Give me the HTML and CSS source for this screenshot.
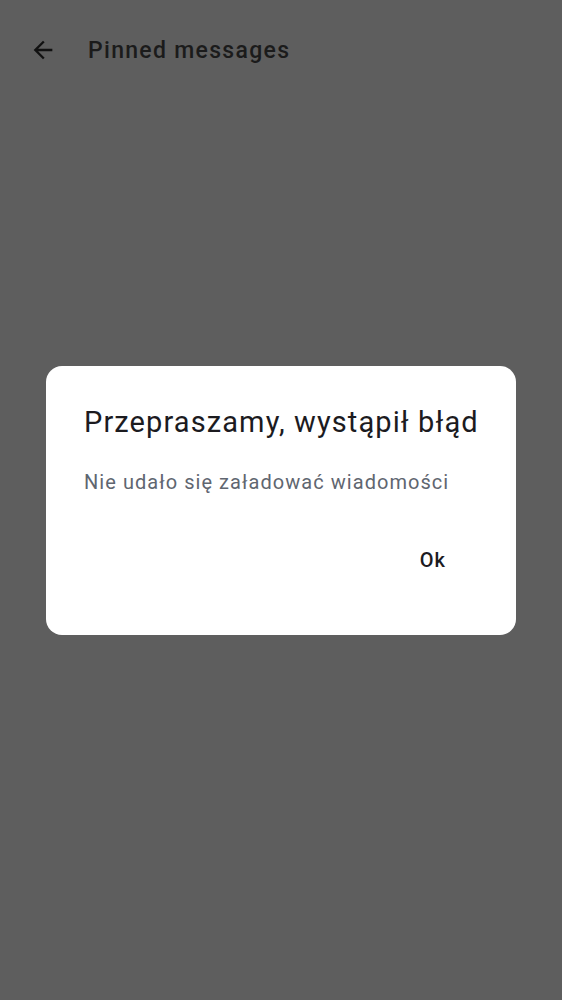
FILE: index.html
```html
<!DOCTYPE html>
<html lang="pl">
<head>
<meta charset="utf-8">
<link rel="stylesheet" href="styles.css">
</head>
<body>
<div class="app">
  <header class="appbar">
    <button class="back" aria-label="Back">
      <svg width="24" height="24" viewBox="0 0 24 24"><path d="M20 11H7.83l5.59-5.59L12 4l-8 8 8 8 1.41-1.41L7.83 13H20v-2z" fill="currentColor"/></svg>
    </button>
    <h1 class="title">Pinned messages</h1>
  </header>
  <main class="content"></main>
</div>
<div class="scrim">
  <div class="dialog" role="alertdialog">
    <h2 class="dlg-title">Przepraszamy, wystąpił błąd</h2>
    <p class="dlg-text">Nie udało się załadować wiadomości</p>
    <div class="dlg-actions">
      <button class="dlg-btn">Ok</button>
    </div>
  </div>
</div>
</body>
</html>
```

FILE: styles.css
```css
* { box-sizing: border-box; }
html, body { margin: 0; padding: 0; height: 100%; }
body {
  font-family: Roboto, "Noto Sans", sans-serif;
  background: #5e5e5e;
}
.app {
  display: flex;
  flex-direction: column;
  height: 100%;
}
.appbar {
  display: flex;
  align-items: center;
  height: 100px;
  padding: 0 0 0 19px;
  gap: 21px;
}
.back {
  display: flex;
  align-items: center;
  justify-content: center;
  width: 48px;
  height: 48px;
  border: 0;
  padding: 0;
  background: transparent;
  color: #111;
}
.back svg { width: 28px; height: 28px; }
.title {
  margin: 0;
  font-size: 23px;
  font-weight: 500;
  color: #1b1b1b;
  letter-spacing: 1.3px;
}
.content { flex: 1; }
.scrim {
  position: fixed;
  inset: 0;
  display: flex;
  align-items: center;
  justify-content: center;
}
.dialog {
  width: 470px;
  height: 269px;
  background: #fff;
  border-radius: 16px;
  padding: 36px 30px 0 38px;
  display: flex;
  flex-direction: column;
}
.dlg-title {
  margin: 0;
  font-size: 29px;
  font-weight: 400;
  color: #1c1b1f;
  line-height: 40px;
  letter-spacing: 1.1px;
  white-space: nowrap;
}
.dlg-text {
  margin: 26px 0 0 0;
  font-size: 20px;
  color: #5f6670;
  line-height: 28px;
  letter-spacing: 1.05px;
  white-space: nowrap;
}
.dlg-actions {
  display: flex;
  justify-content: flex-end;
  margin-top: 44px;
}
.dlg-btn {
  border: 0;
  background: transparent;
  font-family: inherit;
  font-size: 20px;
  font-weight: 500;
  color: #1c1b1f;
  letter-spacing: 1px;
  padding: 8px 40px 8px 16px;
  height: 40px;
  line-height: 24px;
}
```
